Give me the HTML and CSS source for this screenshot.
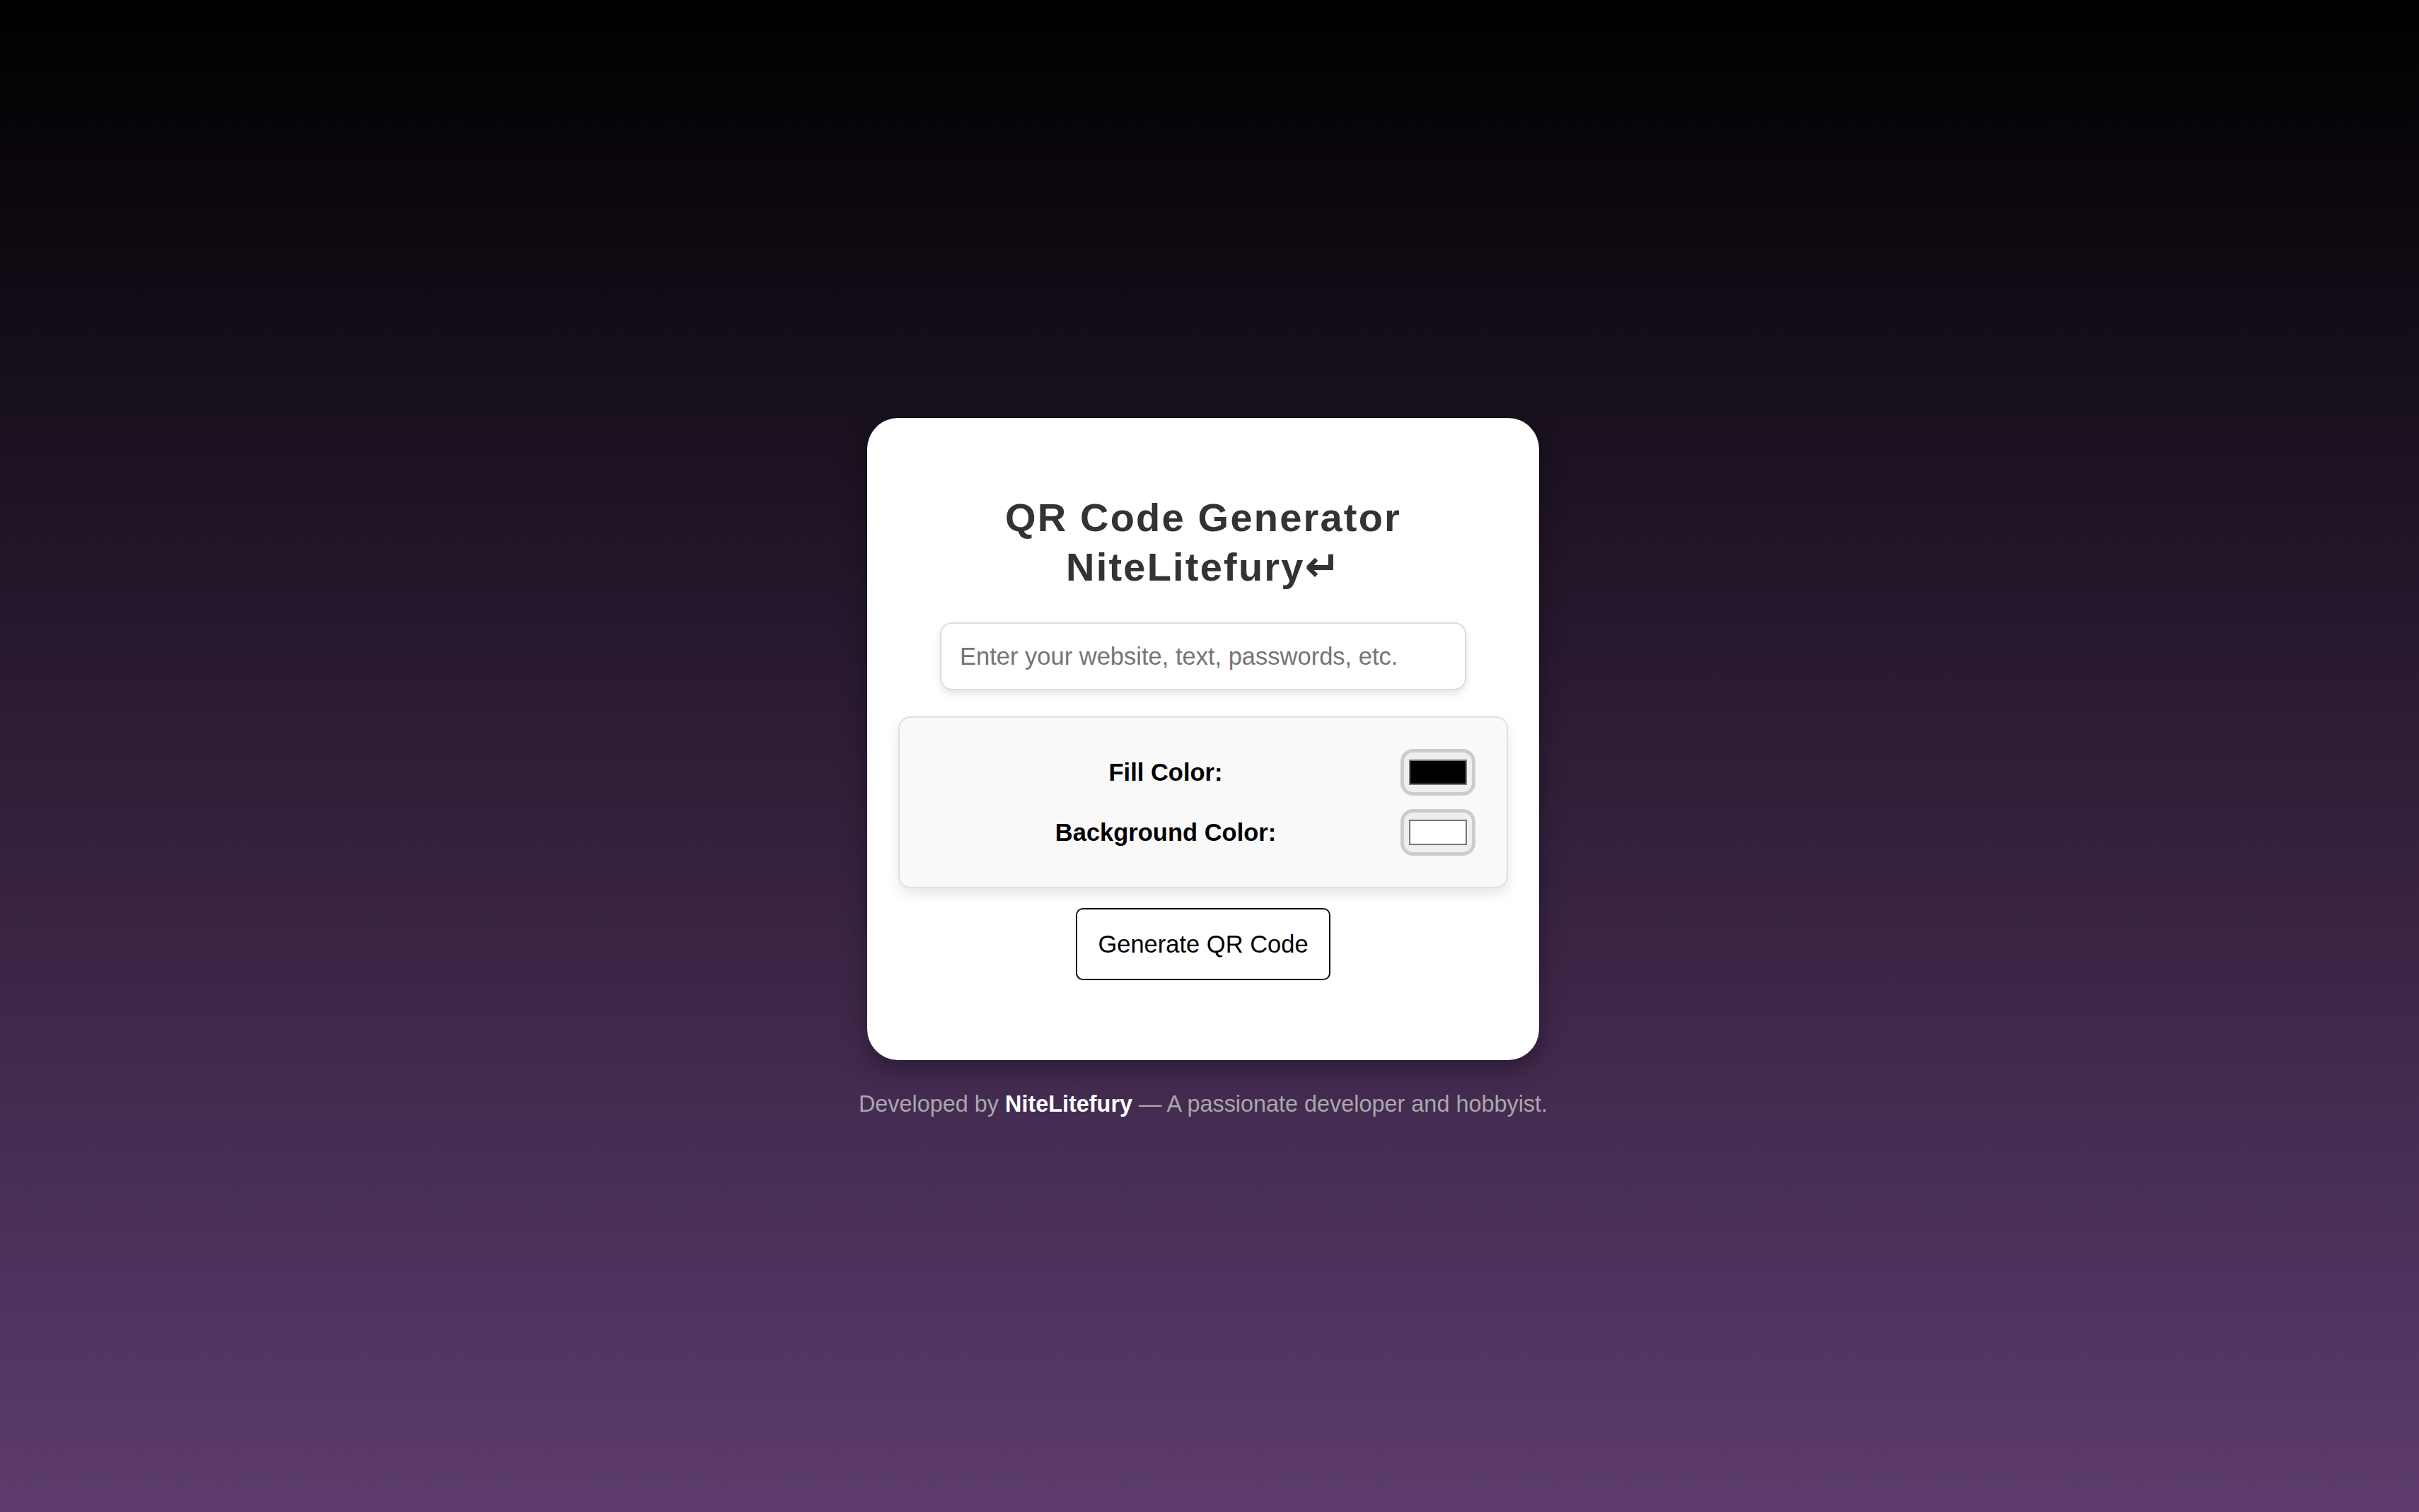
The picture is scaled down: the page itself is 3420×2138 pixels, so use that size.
FILE: index.html
```html
<!DOCTYPE html>
<html lang="en">
<head>
<meta charset="utf-8">
<title>QR Code Generator NiteLitefury</title>
<link rel="stylesheet" href="styles.css">
</head>
<body>
  <main class="card">
    <h1 class="title">QR Code Generator<br>NiteLitefury<span class="ret">↵</span></h1>
    <input class="text-input" type="text" placeholder="Enter your website, text, passwords, etc.">
    <div class="options">
      <div class="option-row">
        <label class="option-label">Fill Color:</label>
        <span class="swatch"><span class="swatch-inner fill-black"></span></span>
      </div>
      <div class="option-row">
        <label class="option-label">Background Color:</label>
        <span class="swatch"><span class="swatch-inner fill-white"></span></span>
      </div>
    </div>
    <button class="generate" type="button">Generate QR Code</button>
  </main>
  <footer class="footer">Developed by <strong class="footer-name">NiteLitefury</strong> — A passionate developer and hobbyist.</footer>
</body>
</html>
```
FILE: styles.css
```css
html, body {
  margin: 0;
  padding: 0;
}

body {
  min-height: 2138px;
  box-sizing: border-box;
  padding: 591px 18px 0 0;
  background: linear-gradient(to bottom, #000000 0%, #5d3b6e 100%);
  font-family: "Liberation Sans", Arial, Helvetica, sans-serif;
  display: flex;
  flex-direction: column;
  align-items: center;
}

.card {
  width: 950px;
  box-sizing: border-box;
  padding: 106px 44px 113px;
  background: #ffffff;
  border-radius: 44px;
  box-shadow: 0 12px 36px rgba(0, 0, 0, 0.35);
  display: flex;
  flex-direction: column;
  align-items: center;
}

.title {
  margin: 0;
  font-size: 56px;
  line-height: 70px;
  font-weight: bold;
  letter-spacing: 2.2px;
  color: #333333;
  text-align: center;
}

.ret {
  font-family: "DejaVu Sans", sans-serif;
  font-weight: bold;
  font-size: 60px;
  letter-spacing: 0;
  line-height: 0;
}

.text-input {
  margin-top: 43px;
  width: 744px;
  height: 96px;
  box-sizing: border-box;
  padding: 0 26px;
  border: 2px solid #dcdcdc;
  border-radius: 17px;
  background: #ffffff;
  font-family: "Liberation Sans", Arial, sans-serif;
  font-size: 34.5px;
  color: #333;
  box-shadow: 0 5px 12px rgba(0, 0, 0, 0.1);
  outline: none;
}

.text-input::placeholder {
  color: #757575;
}

.options {
  margin-top: 37px;
  width: 100%;
  box-sizing: border-box;
  padding: 44px;
  background: #f9f9f9;
  border: 2px solid #e0e0e0;
  border-radius: 17px;
  box-shadow: 0 8px 18px rgba(0, 0, 0, 0.1);
  display: flex;
  flex-direction: column;
  gap: 19px;
}

.option-row {
  display: flex;
  align-items: center;
}

.option-label {
  flex: 1;
  text-align: center;
  font-size: 34.5px;
  font-weight: bold;
  color: #000000;
}

.swatch {
  width: 106px;
  height: 66px;
  box-sizing: border-box;
  border: 5px solid #cccccc;
  border-radius: 18px;
  background: #efefef;
  display: flex;
  align-items: center;
  justify-content: center;
}

.swatch-inner {
  width: 82px;
  height: 36px;
  box-sizing: border-box;
  border: 2px solid #777777;
}

.fill-black { background: #000000; }
.fill-white { background: #ffffff; }

.generate {
  margin-top: 28px;
  width: 360px;
  height: 102px;
  box-sizing: border-box;
  padding: 0;
  border: 2px solid #111111;
  border-radius: 10px;
  background: #ffffff;
  font-family: "Liberation Sans", Arial, sans-serif;
  font-size: 34.5px;
  color: #000000;
}

.footer {
  margin-top: 44px;
  font-size: 32.4px;
  color: #aaa6ad;
  text-align: center;
}

.footer-name {
  color: #ffffff;
  font-weight: bold;
}
```
